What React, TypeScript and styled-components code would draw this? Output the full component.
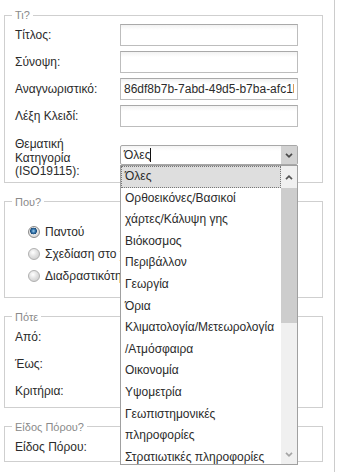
import React from 'react';
import styled, { createGlobalStyle } from 'styled-components';

const GlobalStyle = createGlobalStyle`
  body {
    margin: 0;
    background: #fff;
    font-family: 'Liberation Sans', Arial, sans-serif;
    font-size: 12px;
    color: #2b2b2b;
  }
`;

const Page = styled.div`
  box-sizing: border-box;
  width: 335px;
  min-height: 100vh;
  padding: 9px 11px 0 4px;
  border-right: 1px solid #cccccc;
`;

const Group = styled.fieldset`
  margin: 0 0 13px;
  padding: 3px 10px;
  min-width: 0;
  border: 1px solid #cfcfcf;
`;

const Legend = styled.legend`
  margin-left: -3px;
  padding: 0 3px;
  font-size: 11px;
  line-height: 12px;
  color: #8a8a8a;
`;

const FormGrid = styled.div<{ $bottom?: number }>`
  display: grid;
  grid-template-columns: 105px 178px;
  row-gap: 5px;
  align-items: center;
  padding-bottom: ${(p) => p.$bottom ?? 0}px;
`;

const Label = styled.label`
  line-height: 22px;
  white-space: nowrap;
`;

const MultiLabel = styled.label`
  align-self: start;
  margin-top: 6px;
  line-height: 13.5px;
`;

const TextInput = styled.input`
  box-sizing: border-box;
  width: 178px;
  height: 22px;
  margin: 0;
  padding: 0 3px;
  border: 1px solid #bdbdbd;
  border-top-color: #a9a9a9;
  background: linear-gradient(#f2f2f2, #ffffff 5px);
  font: inherit;
  color: #2b2b2b;
  outline: none;
`;

const Combo = styled.div`
  position: relative;
  align-self: start;
  margin-top: 13px;
  box-sizing: border-box;
  width: 178px;
  height: 20px;
  display: flex;
  border: 1px solid #a8a8a8;
  border-radius: 2px;
  background: linear-gradient(#f4f4f4, #ffffff 5px);
`;

const ComboText = styled.div`
  flex: 1;
  padding-left: 3px;
  line-height: 18px;
`;

const Caret = styled.span`
  border-right: 1px solid #111;
`;

const ArrowButton = styled.div<{ $bg: string }>`
  width: 16px;
  display: flex;
  align-items: center;
  justify-content: center;
  background: ${(p) => p.$bg};
`;

const ComboList = styled.div`
  position: absolute;
  top: calc(100% + 1px);
  left: -1px;
  z-index: 10;
  box-sizing: border-box;
  width: 178px;
  height: 300px;
  display: flex;
  border: 1px solid #a0a0a0;
  background: #fff;
`;

const Items = styled.div`
  flex: 1;
  overflow: hidden;
`;

const Item = styled.div<{ $active?: boolean }>`
  padding: 0 4px;
  line-height: 21.6px;
  white-space: nowrap;
  background: ${(p) => (p.$active ? '#dedede' : 'transparent')};
  outline: ${(p) => (p.$active ? '1px dotted #777' : 'none')};
  outline-offset: -1px;
`;

const Scrollbar = styled.div`
  width: 16px;
  display: flex;
  flex-direction: column;
  background: #f0f0f0;
`;

const Thumb = styled.div`
  height: 135px;
  background: #cdcdcd;
`;

const Track = styled.div`
  flex: 1;
`;

const ScrollButton = styled.div<{ $h: number }>`
  height: ${(p) => p.$h}px;
  display: flex;
  align-items: center;
  justify-content: center;
`;

const RadioList = styled.div`
  display: grid;
  padding: 10px 0 7px 13px;
`;

const RadioRow = styled.div`
  display: flex;
  align-items: center;
  gap: 5px;
  line-height: 22px;
  white-space: nowrap;
`;

const RadioMark = styled.span<{ $on?: boolean }>`
  box-sizing: border-box;
  width: 12px;
  height: 12px;
  border-radius: 50%;
  border: 1px solid ${(p) => (p.$on ? '#8a8a8a' : '#b0b0b0')};
  background: ${(p) =>
    p.$on
      ? 'radial-gradient(circle at 45% 40%, #9fd0f0 0, #2f6fa6 2px, #1d4d7a 3.2px, #e8e8e8 3.6px, #c8c8c8 100%)'
      : 'radial-gradient(circle at 40% 35%, #ffffff 0, #e2e2e2 45%, #c6c6c6 100%)'};
`;

const Chevron: React.FC<{ up?: boolean; color: string }> = ({ up, color }) => (
  <svg width="8" height="5" viewBox="0 0 8 5">
    <polyline
      points={up ? '1,4.2 4,1.2 7,4.2' : '1,0.8 4,3.8 7,0.8'}
      fill="none"
      stroke={color}
      strokeWidth="1.7"
    />
  </svg>
);

// only the entries that fit in the open list are shown
const categories: string[][] = [
  ['Όλες'],
  ['Ορθοεικόνες/Βασικοί', 'χάρτες/Κάλυψη γης'],
  ['Βιόκοσμος'],
  ['Περιβάλλον'],
  ['Γεωργία'],
  ['Όρια'],
  ['Κλιματολογία/Μετεωρολογία', '/Ατμόσφαιρα'],
  ['Οικονομία'],
  ['Υψομετρία'],
  ['Γεωπιστημονικές', 'πληροφορίες'],
  ['Στρατιωτικές πληροφορίες'],
];

const App: React.FC = () => (
  <Page>
    <GlobalStyle />

    <Group>
      <Legend>Τι?</Legend>
      <FormGrid>
        <Label>Τίτλος:</Label>
        <TextInput readOnly value="" />
        <Label>Σύνοψη:</Label>
        <TextInput readOnly value="" />
        <Label>Αναγνωριστικό:</Label>
        <TextInput readOnly value="86df8b7b-7abd-49d5-b7ba-afc1b1d4e2f0" />
        <Label>Λέξη Κλειδί:</Label>
        <TextInput readOnly value="" />
        <MultiLabel>
          Θεματική
          <br />
          Κατηγορία
          <br />
          (ISO19115):
        </MultiLabel>
        <Combo>
          <ComboText>
            <Caret>Όλες</Caret>
          </ComboText>
          <ArrowButton $bg="#d2d2d2">
            <Chevron color="#4a4a4a" />
          </ArrowButton>
          <ComboList>
            <Items>
              {categories.map((lines, i) => (
                <Item key={i} $active={i === 0}>
                  {lines.map((l, j) => (
                    <div key={j}>{l}</div>
                  ))}
                </Item>
              ))}
            </Items>
            <Scrollbar>
              <ScrollButton $h={22}>
                <Chevron up color="#555" />
              </ScrollButton>
              <Thumb />
              <Track />
              <ScrollButton $h={20}>
                <Chevron color="#a5a5a5" />
              </ScrollButton>
            </Scrollbar>
          </ComboList>
        </Combo>
      </FormGrid>
    </Group>

    <Group>
      <Legend>Που?</Legend>
      <RadioList>
        <RadioRow>
          <RadioMark $on />
          Παντού
        </RadioRow>
        <RadioRow>
          <RadioMark />
          Σχεδίαση στο χάρτη
        </RadioRow>
        <RadioRow>
          <RadioMark />
          Διαδραστικότητα
        </RadioRow>
      </RadioList>
    </Group>

    <Group>
      <Legend>Πότε</Legend>
      <FormGrid $bottom={2}>
        <Label>Από:</Label>
        <TextInput readOnly value="" />
        <Label>Έως:</Label>
        <TextInput readOnly value="" />
        <Label>Κριτήρια:</Label>
        <TextInput readOnly value="" />
      </FormGrid>
    </Group>

    <Group>
      <Legend>Είδος Πόρου?</Legend>
      <FormGrid>
        <Label>Είδος Πόρου:</Label>
        <TextInput readOnly value="" />
      </FormGrid>
    </Group>
  </Page>
);

export default App;
